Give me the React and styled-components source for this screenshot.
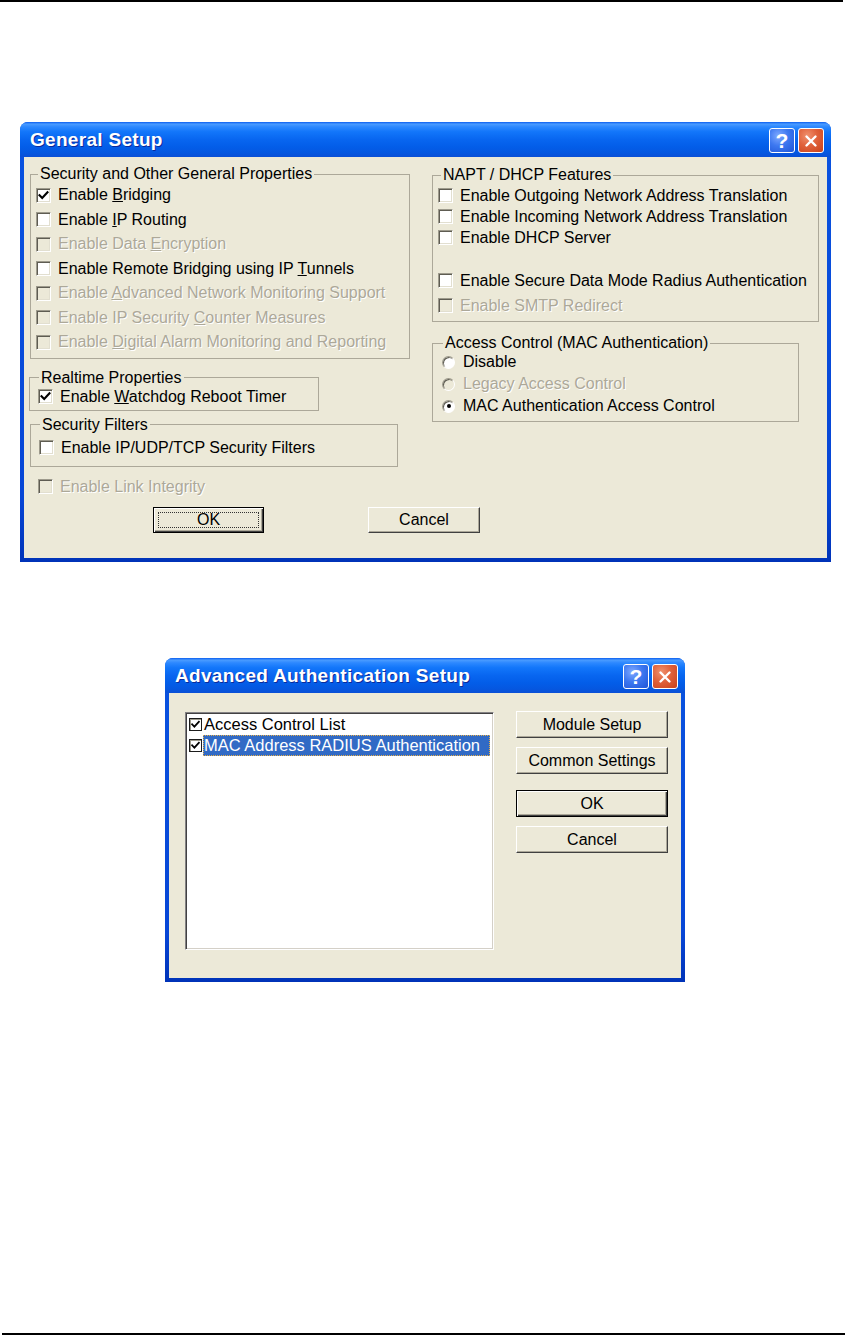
import React from 'react';
import styled, { createGlobalStyle, css } from 'styled-components';

const Global = createGlobalStyle`
  html, body { margin: 0; padding: 0; background: #fff; }
  body { font-family: "Liberation Sans", Arial, sans-serif; color: #000; }
  * { box-sizing: border-box; }
`;

const Page = styled.div`
  width: 851px;
  height: 1341px;
  display: flex;
  flex-direction: column;
  overflow: hidden;
  background: #fff;
`;

const Rule = styled.div`
  flex-shrink: 0;
  height: 2px;
  width: 843px;
  background: #000;
  margin-left: ${p => p.$ml || 0}px;
  margin-top: ${p => p.$mt || 0}px;
`;

const Window = styled.div`
  flex-shrink: 0;
  margin-left: ${p => p.$x}px;
  margin-top: ${p => p.$mt}px;
  width: ${p => p.$w}px;
  height: ${p => p.$h}px;
  display: flex;
  flex-direction: column;
  border-radius: 8px 8px 0 0;
  background: linear-gradient(to bottom, #0A53E0 0%, #0746D6 85%, #0033B8 100%);
`;

const TitleBar = styled.div`
  flex-shrink: 0;
  height: 35px;
  display: flex;
  align-items: center;
  padding: 1px 7px 0 10px;
  border-radius: 8px 8px 0 0;
  background: linear-gradient(
    to bottom,
    #0A5EF0 0%,
    #4A9BFF 6%,
    #2C88FF 14%,
    #1276FA 28%,
    #0866F0 50%,
    #035DE8 72%,
    #0557E0 88%,
    #0A4FD6 100%
  );
`;

const Title = styled.div`
  flex: 1;
  color: #fff;
  font-weight: bold;
  font-size: 19px;
  letter-spacing: 0.3px;
  text-shadow: 1px 1px #0B2A9A;
  white-space: nowrap;
`;

const CapButtons = styled.div`
  display: flex;
  gap: 3px;
  margin-top: 1px;
`;

const CapButton = styled.div`
  width: 26px;
  height: 25px;
  border: 1px solid #fff;
  border-radius: 3px;
  display: flex;
  align-items: center;
  justify-content: center;
  color: #fff;
  font-weight: bold;
  font-size: 21px;
  line-height: 1;
  background: ${p =>
    p.$close
      ? 'radial-gradient(circle at 35% 30%, #F0916E 0%, #E0613A 45%, #C8411A 100%)'
      : 'radial-gradient(circle at 35% 30%, #7FA9FF 0%, #3D78F0 45%, #1F55D8 100%)'};
`;

const Client = styled.div`
  flex: 1;
  margin: 0 4px 4px;
  background: #ECE9D8;
`;

/* ---------- General Setup ---------- */

const SetupBody = styled.div`
  display: grid;
  grid-template-columns: 408px 1fr;
  padding-top: 9px;
`;

const Column = styled.div`
  display: flex;
  flex-direction: column;
  align-items: flex-start;
`;

const Group = styled.fieldset`
  margin: ${p => p.$mt || 0}px 0 0 ${p => p.$ml || 0}px;
  width: ${p => p.$w}px;
  min-width: 0;
  padding: ${p => p.$pt || 0}px 0 ${p => p.$pb || 0}px ${p => p.$pl || 0}px;
  border: 1px solid #ACA899;
  display: flex;
  flex-direction: column;
`;

const Legend = styled.legend`
  margin-left: ${p => p.$ml || 0}px;
  padding: 0 2px;
  font-size: 16px;
  line-height: 16px;
  color: #000;
  white-space: nowrap;
`;

const Row = styled.div`
  display: flex;
  align-items: center;
  gap: ${p => p.$gap || 7}px;
  height: ${p => p.$h || 20}px;
  margin-left: ${p => p.$ml || 0}px;
  font-size: 16px;
  white-space: nowrap;
  color: ${p => (p.$disabled ? '#ACA899' : '#000')};
  ${p => p.$disabled && css`text-shadow: 1px 1px #fff;`}
`;

const Box = styled.span`
  flex-shrink: 0;
  width: 15px;
  height: 15px;
  display: flex;
  align-items: center;
  justify-content: center;
  background: ${p => (p.$disabled ? '#ECE9D8' : '#fff')};
  border: 1px solid;
  border-color: #9D9A8C #fff #fff #9D9A8C;
  box-shadow: inset 1px 1px #5E5C52, inset -1px -1px #E2DFD0;
`;

const RadioDot = styled.span`
  flex-shrink: 0;
  width: 13px;
  height: 13px;
  border-radius: 50%;
  display: flex;
  align-items: center;
  justify-content: center;
  background: ${p => (p.$disabled ? '#ECE9D8' : '#fff')};
  border: 1px solid;
  border-color: #9D9A8C #fff #fff #9D9A8C;
  box-shadow: inset 1px 1px #5E5C52;
  &::after {
    content: '';
    display: ${p => (p.$checked ? 'block' : 'none')};
    width: 4px;
    height: 4px;
    border-radius: 50%;
    background: #000;
  }
`;

const Spacer = styled.div`
  height: ${p => p.$h}px;
  flex-shrink: 0;
`;

const ButtonRow = styled.div`
  grid-column: 1 / -1;
  display: flex;
  gap: ${p => p.$gap}px;
  padding-left: ${p => p.$pl}px;
  margin-top: ${p => p.$mt}px;
`;

const Button = styled.button`
  position: relative;
  width: ${p => p.$w}px;
  height: ${p => p.$h}px;
  margin-top: ${p => p.$mt || 0}px;
  padding: 0;
  background: #ECE9D8;
  font-family: "Liberation Sans", Arial, sans-serif;
  font-size: 16px;
  color: #000;
  display: flex;
  align-items: center;
  justify-content: center;
  border: 1px solid;
  border-color: #fff #404040 #404040 #fff;
  box-shadow: inset -1px -1px #ACA899;
  ${p =>
    p.$default &&
    css`
      border: 1px solid #000;
      box-shadow: inset 1px 1px #fff, inset -1px -1px #404040, inset -2px -2px #ACA899;
    `}
`;

const FocusRect = styled.span`
  position: absolute;
  inset: 4px;
  border: 1px dotted #333;
  pointer-events: none;
`;

/* ---------- Advanced Authentication ---------- */

const AuthBody = styled.div`
  display: flex;
  align-items: flex-start;
  padding: 18px 0 0 16px;
`;

const ListBox = styled.div`
  width: 309px;
  height: 238px;
  margin-top: 1px;
  background: #fff;
  border: 1px solid;
  border-color: #848284 #fff #fff #848284;
  box-shadow: inset 1px 1px #424142, inset -1px -1px #D4D0C8;
  padding: 1px 2px 0 2px;
  display: flex;
  flex-direction: column;
`;

const ListItem = styled.div`
  display: flex;
  align-items: center;
  height: 21px;
  padding-left: 1px;
  font-size: 16.5px;
  white-space: nowrap;
`;

const SmallBox = styled.span`
  flex-shrink: 0;
  width: 13px;
  height: 13px;
  margin-right: 1px;
  display: flex;
  align-items: center;
  justify-content: center;
  background: #fff;
  border: 1px solid #1C1C1C;
  box-shadow: inset 1px 1px #9D9A8C;
`;

const ItemText = styled.span`
  flex: 1;
  align-self: stretch;
  display: flex;
  align-items: center;
  padding-left: 1px;
  margin-right: 1px;
  ${p =>
    p.$selected &&
    css`
      background: #316AC5;
      color: #fff;
      outline: 1px dotted #E8B04A;
      outline-offset: -1px;
    `}
`;

const ButtonColumn = styled.div`
  display: flex;
  flex-direction: column;
  gap: 9px;
  margin-left: 22px;
`;

const Check = ({ size = 13 }) => (
  <svg width={size} height={size} viewBox="0 0 13 13">
    <path d="M2.5 6.2 L5.2 9 L10.5 3.2" fill="none" stroke="#000" strokeWidth="2.1" strokeLinecap="square" />
  </svg>
);

const CheckRow = ({ checked, disabled, children, h, ml }) => (
  <Row $disabled={disabled} $h={h} $ml={ml}>
    <Box $disabled={disabled}>{checked && <Check />}</Box>
    <span>{children}</span>
  </Row>
);

const RadioRow = ({ checked, disabled, children }) => (
  <Row $disabled={disabled} $h={22} $gap={8}>
    <RadioDot $disabled={disabled} $checked={checked} />
    <span>{children}</span>
  </Row>
);

const Caption = ({ children }) => (
  <TitleBar>
    <Title>{children}</Title>
    <CapButtons>
      <CapButton>?</CapButton>
      <CapButton $close>
        <svg width="14" height="14" viewBox="0 0 14 14">
          <path d="M2.5 2.5 L11.5 11.5 M11.5 2.5 L2.5 11.5" stroke="#fff" strokeWidth="2.4" strokeLinecap="round" />
        </svg>
      </CapButton>
    </CapButtons>
  </TitleBar>
);

export default function App() {
  return (
    <Page>
      <Global />
      <Rule />

      <Window $x={20} $mt={120} $w={811} $h={440}>
        <Caption>General Setup</Caption>
        <Client>
          <SetupBody>
            <Column>
              <Group $ml={6} $w={380} $pt={1} $pb={3} $pl={5}>
                <Legend $ml={2}>Security and Other General Properties</Legend>
                <CheckRow checked h={24.5}>Enable <u>B</u>ridging</CheckRow>
                <CheckRow h={24.5}>Enable <u>I</u>P Routing</CheckRow>
                <CheckRow disabled h={24.5}>Enable Data <u>E</u>ncryption</CheckRow>
                <CheckRow h={24.5}>Enable Remote Bridging using IP <u>T</u>unnels</CheckRow>
                <CheckRow disabled h={24.5}>Enable <u>A</u>dvanced Network Monitoring Support</CheckRow>
                <CheckRow disabled h={24.5}>Enable IP Security <u>C</u>ounter Measures</CheckRow>
                <CheckRow disabled h={24.5}>Enable <u>D</u>igital Alarm Monitoring and Reporting</CheckRow>
              </Group>

              <Group $mt={11} $ml={5} $w={290} $pt={1} $pb={3} $pl={8}>
                <Legend $ml={1}>Realtime Properties</Legend>
                <CheckRow checked>Enable <u>W</u>atchdog Reboot Timer</CheckRow>
              </Group>

              <Group $mt={6} $ml={6} $w={368} $pt={5} $pb={8} $pl={8}>
                <Legend $ml={1}>Security Filters</Legend>
                <CheckRow>Enable IP/UDP/TCP Security Filters</CheckRow>
              </Group>

              <Spacer $h={10} />
              <CheckRow disabled ml={14}>Enable Link Integrity</CheckRow>
            </Column>

            <Column>
              <Group $mt={1} $w={387} $pt={2} $pb={3} $pl={5}>
                <Legend $ml={3}>NAPT / DHCP Features</Legend>
                <CheckRow h={21}>Enable Outgoing Network Address Translation</CheckRow>
                <CheckRow h={21}>Enable Incoming Network Address Translation</CheckRow>
                <CheckRow h={21}>Enable DHCP Server</CheckRow>
                <Spacer $h={20} />
                <CheckRow h={25}>Enable Secure Data Mode Radius Authentication</CheckRow>
                <CheckRow disabled h={25}>Enable SMTP Redirect</CheckRow>
              </Group>

              <Group $mt={13} $w={367} $pt={0} $pb={4} $pl={9}>
                <Legend $ml={1}>Access Control (MAC Authentication)</Legend>
                <RadioRow>Disable</RadioRow>
                <RadioRow disabled>Legacy Access Control</RadioRow>
                <RadioRow checked>MAC Authentication Access Control</RadioRow>
              </Group>
            </Column>

            <ButtonRow $pl={129} $gap={104} $mt={10}>
              <Button $w={111} $h={26} $default>
                OK
                <FocusRect />
              </Button>
              <Button $w={112} $h={26}>Cancel</Button>
            </ButtonRow>
          </SetupBody>
        </Client>
      </Window>

      <Window $x={165} $mt={96} $w={520} $h={324}>
        <Caption>Advanced Authentication Setup</Caption>
        <Client>
          <AuthBody>
            <ListBox>
              <ListItem>
                <SmallBox><Check size={11} /></SmallBox>
                <ItemText>Access Control List</ItemText>
              </ListItem>
              <ListItem>
                <SmallBox><Check size={11} /></SmallBox>
                <ItemText $selected>MAC Address RADIUS Authentication</ItemText>
              </ListItem>
            </ListBox>
            <ButtonColumn>
              <Button $w={152} $h={27}>Module Setup</Button>
              <Button $w={152} $h={27}>Common Settings</Button>
              <Button $w={152} $h={27} $mt={7} $default>OK</Button>
              <Button $w={152} $h={27}>Cancel</Button>
            </ButtonColumn>
          </AuthBody>
        </Client>
      </Window>

      <Rule $ml={2} $mt={351} />
    </Page>
  );
}
